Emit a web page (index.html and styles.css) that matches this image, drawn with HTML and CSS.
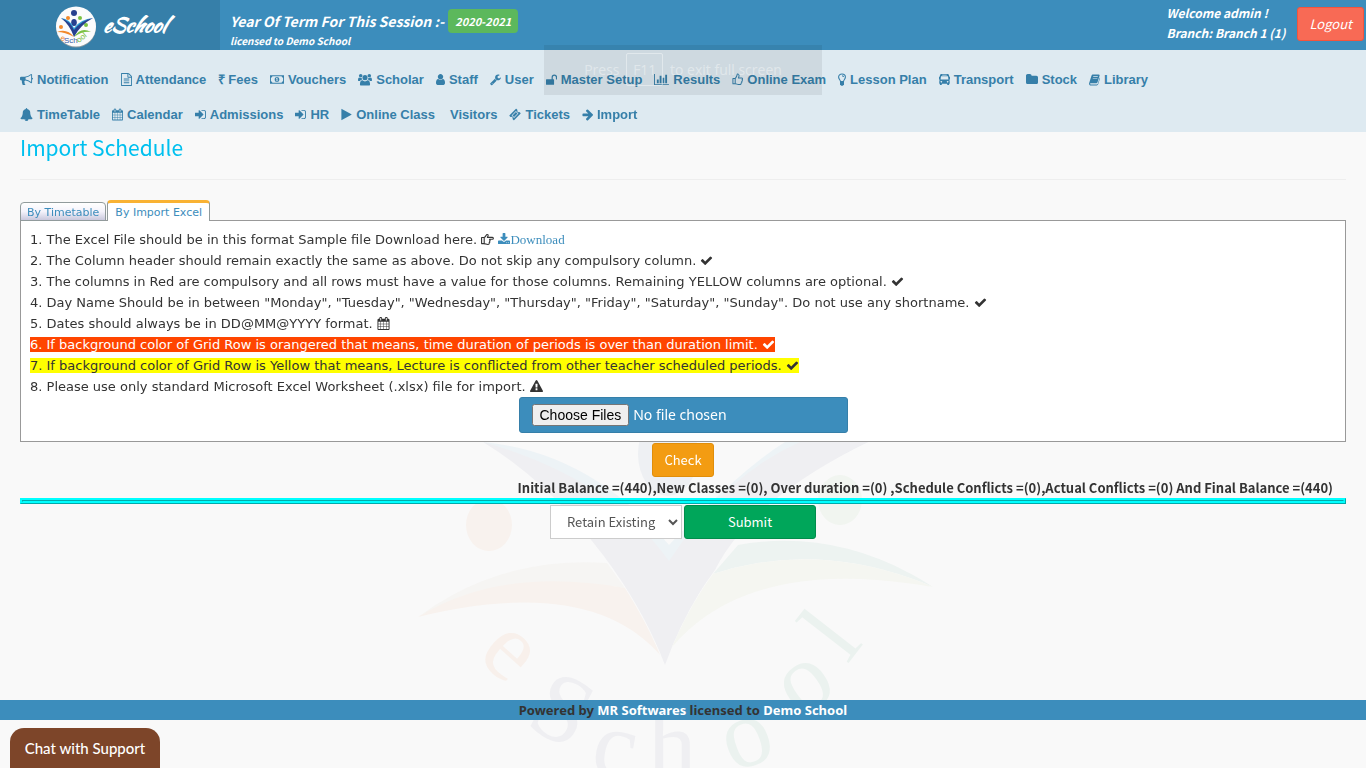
FILE: index.html
```html
<!DOCTYPE html>
<html lang="en">
<head>
<meta charset="utf-8">
<title>eSchool - Import Schedule</title>
<link rel="stylesheet" href="styles.css">
</head>
<body>
<svg class="sprite" aria-hidden="true">
  <symbol id="bullhorn" viewBox="0 0 1792 1792"><path d="M1664 640q53 0 90.500 37.500t37.500 90.500-37.500 90.500-90.500 37.500v384q0 52-38 90t-90 38q-417-347-812-380-58 19-91 66t-31 100.500 40 92.500q-20 33-23 65.500t6 58 33.500 55 48 50 61.500 50.500q-29 58-111.500 83t-168.500 11.500-132-55.500q-7-23-29.500-87.500t-32-94.500-23-89-15-101 3.500-98.500 22-110.500h-122q-66 0-113-47t-47-113v-192q0-66 47-113t113-47h480q435 0 896-384 52 0 90 38t38 90v384zm-128 604v-954q-394 302-768 343v270q377 42 768 341z"/></symbol>
  <symbol id="file" viewBox="128 0 1536 1792"><path d="M1596 380q28 28 48 76t20 88v1152q0 40-28 68t-68 28h-1344q-40 0-68-28t-28-68v-1600q0-40 28-68t68-28h896q40 0 88 20t76 48zm-444-244v376h376q-10-29-22-41l-313-313q-12-12-41-22zm384 1528v-1024h-416q-40 0-68-28t-28-68v-416h-768v1536h1280zm-1024-864q0-14 9-23t23-9h704q14 0 23 9t9 23v64q0 14-9 23t-23 9h-704q-14 0-23-9t-9-23v-64zm736 224q14 0 23 9t9 23v64q0 14-9 23t-23 9h-704q-14 0-23-9t-9-23v-64q0-14 9-23t23-9h704zm0 256q14 0 23 9t9 23v64q0 14-9 23t-23 9h-704q-14 0-23-9t-9-23v-64q0-14 9-23t23-9h704z"/></symbol>
  <symbol id="money" viewBox="0 0 15 13"><path fill-rule="evenodd" d="M0 2h15v9H0zM1 4.500v4A2 2 0 0 1 2.600 10h9.800A2 2 0 0 1 14 8.500v-4A2 2 0 0 1 12.400 3H2.600A2 2 0 0 1 1 4.500zM7.500 3.700c1.700 0 2.500 1.300 2.500 2.800s-.8 2.800-2.500 2.800S5 8 5 6.500s.8-2.800 2.500-2.800zM6.500 5v.8H7v2h-.7v.7h2.500v-.7H8V4.500h-.7z"/></symbol>
  <symbol id="users" viewBox="0 0 15 13"><circle cx="7.500" cy="4.500" r="2.700"/><circle cx="2.900" cy="2.500" r="1.900"/><circle cx="12.100" cy="2.500" r="1.900"/><path d="M3.300 13C2.400 13 2 12.300 2.100 11.200c.1-2.200.9-3.900 2.700-3.900a4 4 0 0 0 5.400 0c1.800 0 2.600 1.700 2.700 3.900.1 1.100-.3 1.800-1.200 1.800zM0 7.500C0 5.500.4 4.400 1.500 4.400c.8.600 1.700.7 2.500.4 0 .9.200 1.400.6 2-1.200.1-1.900.5-2.500 1.300C.8 8.200 0 8.200 0 7.500zM15 7.500c0-2-.4-3.100-1.500-3.100-.8.600-1.700.7-2.500.4 0 .9-.2 1.400-.6 2 1.200.1 1.900.5 2.500 1.300 1.300.1 2.100.1 2.100-.6z"/></symbol>
  <symbol id="user" viewBox="256 0 1280 1792"><path d="M1536 1399q0 109-62.500 187t-150.500 78h-854q-88 0-150.500-78t-62.500-187q0-85 8.500-160.500t31.500-152 58.500-131 94-89 134.500-34.500q131 128 313 128t313-128q76 0 134.500 34.500t94 89 58.500 131 31.500 152 8.500 160.500zm-256-887q0 159-112.500 271.500t-271.500 112.500-271.500-112.500-112.500-271.500 112.500-271.500 271.500-112.500 271.500 112.500 112.500 271.500z"/></symbol>
  <symbol id="wrench" viewBox="64 0 1664 1792"><path d="M448 1472q0-26-19-45t-45-19-45 19-19 45 19 45 45 19 45-19 19-45zm644-420l-682 682q-37 37-90 37-52 0-91-37l-106-108q-38-36-38-90 0-53 38-91l681-681q39 98 114.500 173.500t173.500 114.500zm634-435q0 39-23 106-47 134-164.500 217.500t-258.500 83.500q-185 0-316.500-131.500t-131.500-316.500 131.500-316.500 316.500-131.500q58 0 121.500 16.500t107.500 46.500q16 11 16 28t-16 28l-293 169v224l193 107q5-3 79-48.500t135.500-81 70.500-35.500q15 0 23.500 10t8.500 25z"/></symbol>
  <symbol id="unlock" viewBox="0 0 12 13"><path d="M.6 6.200h5.500V4a3 3 0 0 1 6 0v2c0 .8-1.300.8-1.300 0V4a1.700 1.700 0 0 0-3.400 0v2.200h.8c.4 0 .6.200.6.600v4.800c0 .4-.2.600-.6.600H.6c-.4 0-.6-.2-.6-.6V6.800c0-.4.200-.6.600-.6z"/></symbol>
  <symbol id="chart" viewBox="0 0 2048 1792"><path d="M640 896v512h-256v-512h256zm384-512v1024h-256v-1024h256zm1024 1152v128h-2048v-1536h128v1408h1920zm-640-896v768h-256v-768h256zm384-384v1152h-256v-1152h256z"/></symbol>
  <symbol id="thumb" viewBox="0 0 12 13"><path class="line" d="M1 5.500h2.500C5 4 5.300 3.200 5.700 1c.2-.8 2-.6 2 1.200 0 1-.4 1.800-.7 2.600h3.500c1.300 0 1.300 1.800.4 2 .6.700.5 1.600-.3 1.900.4.700.1 1.400-.6 1.600.2 1-.5 1.700-1.500 1.700H7c-1.300 0-2-.9-3.500-.9H1zM3.500 5.500v5"/></symbol>
  <symbol id="bulb" viewBox="0 0 8 13"><path class="line" d="M2.500 8.500c0-1.500-1.900-2.200-1.900-4.400C.6 2.200 2 1 4 1s3.400 1.200 3.400 3.100c0 2.200-1.900 2.900-1.900 4.400zM4 2.800c.9 0 1.500.5 1.500 1.200"/><path d="M2 9h4v2.500L4.800 12.700H3.200L2 11.500z"/></symbol>
  <symbol id="bus" viewBox="0 0 12 13"><path fill-rule="evenodd" d="M2.500.5h7c1 0 1.400.9 1.500 1.700l.2 1.300h.8v3h-.7l.4 2.500v2.200H11v1.300H9v-1.300H3v1.300H1v-1.300H.3V9l.4-2.500H0v-3h.8L1 2.200C1.100 1.400 1.500.5 2.500.5zM3.500 1.400v.8h5v-.8zM2.200 3l-.5 3.500h8.600L9.800 3zM2.500 8a.9.900 0 1 0 .1 0zM9.400 8a.9.900 0 1 0 .1 0z"/></symbol>
  <symbol id="folder" viewBox="64 0 1664 1792"><path d="M1728 608v704q0 92-66 158t-158 66h-1216q-92 0-158-66t-66-158v-960q0-92 66-158t158-66h320q92 0 158 66t66 158v32h672q92 0 158 66t66 158z"/></symbol>
  <symbol id="book" viewBox="0 0 12 13"><path fill-rule="evenodd" d="M4.500 1h6c.9 0 1.300.6 1 1.500L9.300 9.600c-.2.600-.8 1-1.400 1H2c-.6 0-.9.200-.7.700.1.400.5.600 1 .6h6.300c.5 0 .8-.2 1-.7l2.100-7c.5.300.5.800.3 1.300l-2 6.300c-.2.700-.9 1.200-1.600 1.200H2C.6 13-.3 11.600.2 10.300L2.700 2.500C3 1.500 3.500 1 4.500 1zM4.700 3l-.2.700h5L9.700 3zM4.200 4.800L4 5.500h5l.2-.7z"/></symbol>
  <symbol id="bell" viewBox="0 0 1792 1792"><path d="M912 1696q0-16-16-16-59 0-101.500-42.500t-42.500-101.500q0-16-16-16t-16 16q0 73 51.500 124.500t124.500 51.500q16 0 16-16zm816-288q0 52-38 90t-90 38h-448q0 106-75 181t-181 75-181-75-75-181h-448q-52 0-90-38t-38-90q50-42 91-88t85-119.500 74.500-158.500 50-206 19.500-260q0-152 117-282.500t307-158.500q-8-19-8-39 0-40 28-68t68-28 68 28 28 68q0 20-8 39 190 28 307 158.500t117 282.500q0 139 19.500 260t50 206 74.500 158.500 85 119.500 91 88z"/></symbol>
  <symbol id="calendar" viewBox="64 0 1664 1792"><path d="M192 1664h288v-288h-288v288zm352 0h320v-288h-320v288zm-352-352h288v-320h-288v320zm352 0h320v-320h-320v320zm-352-384h288v-288h-288v288zm736 736h320v-288h-320v288zm-384-736h320v-288h-320v288zm768 736h288v-288h-288v288zm-384-352h320v-320h-320v320zm-352-864v-288q0-13-9.500-22.500t-22.500-9.500h-64q-13 0-22.500 9.500t-9.500 22.500v288q0 13 9.500 22.500t22.500 9.500h64q13 0 22.500-9.500t9.500-22.500zm736 864h288v-320h-288v320zm-384-384h320v-288h-320v288zm384 0h288v-288h-288v288zm32-480v-288q0-13-9.500-22.500t-22.500-9.500h-64q-13 0-22.500 9.500t-9.500 22.500v288q0 13 9.500 22.500t22.500 9.500h64q13 0 22.500-9.500t9.500-22.500zm384-64v1280q0 52-38 90t-90 38h-1408q-52 0-90-38t-38-90v-1280q0-52 38-90t90-38h128v-96q0-66 47-113t113-47h64q66 0 113 47t47 113v96h384v-96q0-66 47-113t113-47h64q66 0 113 47t47 113v96h128q52 0 90 38t38 90z"/></symbol>
  <symbol id="signin" viewBox="128 0 1536 1792"><path d="M1312 896q0 26-19 45l-544 544q-19 19-45 19t-45-19-19-45v-288h-448q-26 0-45-19t-19-45v-384q0-26 19-45t45-19h448v-288q0-26 19-45t45-19 45 19l544 544q19 19 19 45zm352-352v704q0 119-84.500 203.500t-203.500 84.500h-320q-32-8-32-60t32-68h320q66 0 113-47t47-113v-704q0-66-47-113t-113-47h-320q-32-8-32-60t32-68h320q119 0 203.500 84.500t84.500 203.500z"/></symbol>
  <symbol id="play" viewBox="192 0 1408 1792"><path d="M1576 927l-1328 738q-23 13-39.500 3t-16.500-36v-1472q0-26 16.500-36t39.500 3l1328 738q23 13 23 31t-23 31z"/></symbol>
  <symbol id="ticket" viewBox="0 0 13 13"><path fill-rule="evenodd" d="M8.200.6l1 1a1.600 1.600 0 0 0 2.200 2.200l1 1c.3.300.3.600 0 .9l-6.700 6.700c-.3.300-.6.300-.9 0l-1-1a1.600 1.600 0 0 0-2.200-2.200l-1-1c-.3-.3-.3-.6 0-.9L7.300.6c.3-.3.600-.3.900 0zM7.500 2.800L2.800 7.500l2.700 2.700 4.700-4.700zM7.500 3.800l1.700 1.700-3.700 3.700-1.700-1.700z"/></symbol>
  <symbol id="arrow" viewBox="64 0 1536 1792"><path d="M1600 960q0 54-37 91l-651 651q-39 37-91 37-51 0-90-37l-75-75q-38-38-38-91t38-91l293-293h-704q-52 0-84.500-37.500t-32.500-90.500v-128q0-53 32.500-90.500t84.500-37.500h704l-293-294q-38-36-38-90t38-90l75-75q38-38 90-38 53 0 91 38l651 651q37 35 37 90z"/></symbol>
  <symbol id="check" viewBox="64 0 1664 1792"><path d="M1671 566q0 40-28 68l-724 724-136 136q-28 28-68 28t-68-28l-136-136-362-362q-28-28-28-68t28-68l136-136q28-28 68-28t68 28l294 295 656-657q28-28 68-28t68 28l136 136q28 28 28 68z"/></symbol>
  <symbol id="warning" viewBox="0 0 1792 1792"><path d="M1024 1375v-190q0-14-9.500-23.500t-22.500-9.500h-192q-13 0-22.500 9.500t-9.500 23.500v190q0 14 9.500 23.500t22.500 9.500h192q13 0 22.500-9.500t9.500-23.500zm-2-374l18-459q0-12-10-19-13-11-24-11h-220q-11 0-24 11-10 7-10 21l17 457q0 10 10 16.500t24 6.500h185q14 0 23.500-6.500t10.500-16.500zm-14-934l768 1408q35 63-2 126-17 29-46.500 46t-63.500 17h-1536q-34 0-63.500-17t-46.500-46q-37-63-2-126l768-1408q17-31 47-49t65-18 65 18 47 49z"/></symbol>
  <symbol id="download" viewBox="64 0 1664 1792"><path d="M1344 1344q0-26-19-45t-45-19-45 19-19 45 19 45 45 19 45-19 19-45zm256 0q0-26-19-45t-45-19-45 19-19 45 19 45 45 19 45-19 19-45zm128-224v320q0 40-28 68t-68 28h-1472q-40 0-68-28t-28-68v-320q0-40 28-68t68-28h465l135 136q58 56 136 56t136-56l136-136h464q40 0 68 28t28 68zm-325-569q17 41-14 70l-448 448q-18 19-45 19t-45-19l-448-448q-31-29-14-70 17-39 59-39h256v-448q0-26 19-45t45-19h256q26 0 45 19t19 45v448h256q42 0 59 39z"/></symbol>
  <symbol id="hand" viewBox="0 0 13 13"><path class="line" d="M.6 4.500h2.600C4.500 4 5 2 6 1.500c1-.3 1.400.7 1 1.500l-.6 1.400h5c1.300 0 1.300 1.900 0 1.900H8.500c.9.500.8 1.500 0 1.800.6.600.4 1.500-.4 1.700.4.900-.1 1.700-1.200 1.700-1.500 0-2.300-.7-3.700-.9H.6zM3.200 4.500v6.100"/></symbol>
</svg>

<svg class="watermark" viewBox="400 340 560 460" aria-hidden="true">
  <g fill="#eef0f3">
    <ellipse cx="668" cy="454" rx="30" ry="42"/>
    <path fill="#edf3f6" d="M483 442Q590 452 669 545Q740 470 785 442H868Q730 510 669 562Q600 500 483 442z"/>
    <path fill="#efeff2" d="M483 442Q610 478 669 561Q725 475 800 442H868Q750 500 715 570Q685 610 665 665Q640 600 592 541Q545 480 483 442z"/>
  </g>
  <ellipse cx="489" cy="525" rx="23" ry="26" fill="#f8f2ee"/>
  <ellipse cx="840" cy="500" rx="22" ry="25" fill="#f1f5f0"/>
  <path fill="#f6f5f3" d="M418 617Q500 556 607 563L625 588Q500 570 418 617z"/>
  <path fill="#f8f2ee" d="M418 617Q500 566 625 588Q648 625 660 655Q590 575 418 617z"/>
  <path fill="#edf3f1" d="M738 545Q840 527 933 587Q820 539 713 574z"/>
  <path fill="#f5f6f1" d="M933 587Q820 539 713 574Q690 605 672 647Q750 555 933 587z"/>
  <g class="watermark-letters">
    <text fill="#f8f0eb" transform="translate(507 655) rotate(42)">e</text>
    <text fill="#efeff2" transform="translate(558 718) rotate(28)">S</text>
    <text fill="#efeff2" transform="translate(614 755) rotate(10)">c</text>
    <text fill="#efeff2" transform="translate(672 755)">h</text>
    <text fill="#ebf2ef" transform="translate(748 743) rotate(-20)">o</text>
    <text fill="#ebf2ef" transform="translate(807 687) rotate(-35)">o</text>
    <text fill="#ebf2ef" transform="translate(838 640) rotate(-52)">l</text>
  </g>
</svg>

<header class="topbar">
  <a class="brand" href="#">
    <svg class="brand-logo" viewBox="0 0 42 42" aria-hidden="true">
      <circle cx="21" cy="21.500" r="20" fill="#8797a0"/>
      <circle cx="21" cy="20.500" r="20" fill="#fbfbfc"/>
      <circle cx="19" cy="7" r="3" fill="#27408f"/>
      <circle cx="13" cy="12" r="2" fill="#f28a2b"/>
      <circle cx="25" cy="12" r="2" fill="#7ac143"/>
      <circle cx="6" cy="21" r="2" fill="#f28a2b"/>
      <circle cx="31" cy="19" r="2" fill="#7ac143"/>
      <ellipse cx="19" cy="16.500" rx="2.800" ry="3.500" fill="#27408f"/>
      <path fill="#2fa0d8" d="M6 12Q15 13 19 22Q26 13 38 12Q26 15 19 26Q14 16 6 12z"/>
      <path fill="#27408f" d="M6 12Q15 15 19 24Q27 14 38 12Q25 19 19 31Q15 19 6 12z"/>
      <path fill="#f28a2b" d="M2 26Q12 22 19 31Q10 26 2 26z"/>
      <path fill="#7ac143" d="M36 26Q26 20 19 31Q27 25 36 26z"/>
      <g class="brand-letters">
        <text x="5" y="34" fill="#f28a2b" transform="rotate(20 5 34)">e</text>
        <text x="9" y="37" fill="#3d5fa8">Sch</text>
        <text x="24" y="37" fill="#7ac143" transform="rotate(-40 24 37)">ool</text>
      </g>
    </svg>
    <span>eSchool</span>
  </a>
  <div class="session">
    <div class="session-line">Year Of Term For This Session :-<span class="badge">2020-2021</span></div>
    <div class="licence">licensed to Demo School</div>
  </div>
  <div class="account">
    <div>Welcome admin !<br>Branch: Branch 1 (1)</div>
    <button class="btn logout" type="button">Logout</button>
  </div>
</header>

<nav class="menu" aria-label="Main">
  <a href="#"><svg><use href="#bullhorn"/></svg>Notification</a>
  <a href="#"><svg class="w11"><use href="#file"/></svg>Attendance</a>
  <a href="#"><span class="rupee">₹</span>Fees</a>
  <a href="#"><svg class="w14"><use href="#money"/></svg>Vouchers</a>
  <a href="#"><svg class="w14"><use href="#users"/></svg>Scholar</a>
  <a href="#"><svg class="w9"><use href="#user"/></svg>Staff</a>
  <a href="#"><svg class="w11"><use href="#wrench"/></svg>User</a>
  <a href="#"><svg class="w11"><use href="#unlock"/></svg>Master Setup</a>
  <a href="#"><svg class="w15"><use href="#chart"/></svg>Results</a>
  <a href="#"><svg class="w11"><use href="#thumb"/></svg>Online Exam</a>
  <a href="#"><svg class="w8"><use href="#bulb"/></svg>Lesson Plan</a>
  <a href="#"><svg class="w11"><use href="#bus"/></svg>Transport</a>
  <a href="#"><svg class="w12"><use href="#folder"/></svg>Stock</a>
  <a href="#"><svg class="w11"><use href="#book"/></svg>Library</a>
  <a href="#"><svg><use href="#bell"/></svg>TimeTable</a>
  <a href="#"><svg class="w11"><use href="#calendar"/></svg>Calendar</a>
  <a href="#"><svg class="w11"><use href="#signin"/></svg>Admissions</a>
  <a href="#"><svg class="w11"><use href="#signin"/></svg>HR</a>
  <a href="#"><svg class="w11"><use href="#play"/></svg>Online Class</a>
  <a class="plain" href="#">Visitors</a>
  <a href="#"><svg class="w12"><use href="#ticket"/></svg>Tickets</a>
  <a href="#"><svg class="w11"><use href="#arrow"/></svg>Import</a>
</nav>
<div class="fullscreen-hint">Press <kbd>F11</kbd> to exit full screen</div>

<main>
  <h1>Import Schedule</h1>
  <div class="tabs" role="tablist">
    <button class="tab" type="button" role="tab" aria-selected="false">By Timetable</button>
    <button class="tab active" type="button" role="tab" aria-selected="true">By Import Excel</button>
  </div>
  <section class="panel">
    <ol>
      <li><span>1. The Excel File should be in this format Sample file Download here. <svg><use href="#hand"/></svg> <a class="download" href="#"><svg class="w12"><use href="#download"/></svg>Download</a></span></li>
      <li><span>2. The Column header should remain exactly the same as above. Do not skip any compulsory column. <svg><use href="#check"/></svg></span></li>
      <li><span>3. The columns in Red are compulsory and all rows must have a value for those columns. Remaining YELLOW columns are optional. <svg><use href="#check"/></svg></span></li>
      <li><span>4. Day Name Should be in between "Monday", "Tuesday", "Wednesday", "Thursday", "Friday", "Saturday", "Sunday". Do not use any shortname. <svg><use href="#check"/></svg></span></li>
      <li><span>5. Dates should always be in DD@MM@YYYY format. <svg><use href="#calendar"/></svg></span></li>
      <li><span class="over">6. If background color of Grid Row is orangered that means, time duration of periods is over than duration limit. <svg><use href="#check"/></svg></span></li>
      <li><span class="conflict">7. If background color of Grid Row is Yellow that means, Lecture is conflicted from other teacher scheduled periods. <svg><use href="#check"/></svg></span></li>
      <li><span>8. Please use only standard Microsoft Excel Worksheet (.xlsx) file for import. <svg><use href="#warning"/></svg></span></li>
    </ol>
    <input class="file" type="file" multiple aria-label="Excel files">
  </section>
  <button class="btn check" type="button">Check</button>
  <p class="summary">Initial Balance =(440),New Classes =(0), Over duration =(0) ,Schedule Conflicts =(0),Actual Conflicts =(0) And Final Balance =(440)</p>
  <hr>
  <div class="actions">
    <select aria-label="Existing schedule"><option>Retain Existing</option></select>
    <button class="btn submit" type="button">Submit</button>
  </div>
</main>

<footer>Powered by <a href="#">MR Softwares</a> licensed to <a href="#">Demo School</a></footer>
<button class="chat" type="button">Chat with Support</button>
</body>
</html>
```
FILE: styles.css
```css
* { box-sizing: border-box; }

body {
  margin: 0;
  min-height: 100vh;
  display: flex;
  flex-direction: column;
  background: #f9f9f9;
  color: #333;
  font: 13px/20px "Source Sans Pro", "Noto Sans CJK SC", sans-serif;
  padding-bottom: 48px;
}

a { text-decoration: none; color: #3c8dbc; }
svg { width: 13px; height: 13px; fill: currentColor; }
.sprite { position: absolute; width: 0; height: 0; }
.line { fill: none; stroke: currentColor; stroke-width: 1.1; stroke-linejoin: round; }
.w8 { width: 8px; }
.w9 { width: 9px; }
.w11 { width: 11px; }
.w12 { width: 12px; }
.w14 { width: 14px; }
.w15 { width: 15px; }

.watermark {
  position: fixed;
  z-index: -1;
  left: 50%;
  bottom: -32px;
  margin-left: -283px;
  width: 560px;
  height: 460px;
}
.watermark-letters {
  font: 98px "Liberation Serif", serif;
  text-anchor: middle;
}
.watermark-letters text { dominant-baseline: middle; }

.topbar {
  display: flex;
  height: 50px;
  background: #3c8dbc;
  color: #fff;
  font-weight: 700;
  font-style: italic;
}
.brand {
  width: 220px;
  display: flex;
  align-items: center;
  justify-content: center;
  gap: 6px;
  background: #367fa9;
  color: #fff;
  font: italic 700 20px/50px "Kaushan Script", "Liberation Serif", serif;
}
.brand-logo { width: 42px; height: 42px; margin-top: 4px; }
.brand-letters { font: 8px "Liberation Sans", sans-serif; }
.session { padding: 9px 10px 0; flex: 1; }
.session-line {
  display: flex;
  align-items: center;
  gap: 4px;
  font-size: 14px;
  line-height: 24px;
}
.badge {
  background: #5cb85c;
  border-radius: 4px;
  padding: 0 7px;
  font-size: 11px;
}
.licence { font-size: 10px; line-height: 16px; }
.account {
  display: flex;
  gap: 12px;
  align-items: flex-start;
  padding: 3px 2px 0 0;
  font-size: 12px;
}
.btn {
  font: 13px/20px "Source Sans Pro", "Noto Sans CJK SC", sans-serif;
  color: #fff;
  padding: 6px 11px;
  border: 1px solid;
  border-radius: 3px;
}
.logout {
  background: #f86a55;
  border-color: #f4543c;
  font-style: italic;
  margin-top: 4px;
}

.menu {
  display: flex;
  flex-wrap: wrap;
  column-gap: 12px;
  padding: 12px 140px 0 20px;
  background: #deeaf1;
}
.menu a {
  display: flex;
  align-items: center;
  gap: 4px;
  color: #367fa9;
  font: 700 13px/35px "Liberation Sans", Arial, sans-serif;
}
.menu .plain { padding-left: 3px; }
.rupee { width: 6px; }

.fullscreen-hint {
  position: absolute;
  top: 45px;
  left: 50%;
  margin-left: -139px;
  width: 278px;
  height: 50px;
  background: rgba(0, 0, 0, .07);
  color: rgba(255, 255, 255, .4);
  font: 14px/50px "Open Sans", sans-serif;
  text-align: center;
  pointer-events: none;
}
.fullscreen-hint kbd {
  font: inherit;
  border: 1px solid;
  border-radius: 2px;
  padding: 6px;
  margin: 0 3px;
}

main { padding: 0 20px; display: flex; flex-direction: column; }
h1 {
  margin: 0 0 20px;
  padding: 1px 0 18px;
  border-bottom: 1px solid #eee;
  color: #00c0ef;
  font-size: 21px;
  line-height: 28px;
  font-weight: 400;
}
.tabs { display: flex; align-items: flex-end; gap: 1px; margin-bottom: -1px; }
.tab {
  position: relative;
  height: 19px;
  padding: 1px 6px 0;
  border: 1px solid #919b9c;
  border-radius: 4px 4px 0 0;
  background: linear-gradient(#fff, #f4f3fb 50%, #c9c8dd);
  color: #3c8dbc;
  font: 11px/17px Verdana, "DejaVu Sans", sans-serif;
}
.tab.active {
  height: 21px;
  padding: 0 7px;
  border-top: 3px solid #f9b233;
  border-bottom: 0;
  background: #fff;
}
.panel {
  display: flex;
  flex-direction: column;
  align-items: center;
  border: 1px solid #999;
  background: #fff;
  padding: 8px 9px;
}
ol {
  align-self: stretch;
  list-style: none;
  margin: 0;
  padding: 0;
  font: 13px/21px Verdana, "DejaVu Sans", sans-serif;
}
li svg { vertical-align: -2px; }
.download { font-family: "Liberation Serif", serif; }
.over { background: orangered; color: #fff; }
.conflict { background: yellow; }
.file {
  width: 329px;
  height: 36px;
  padding: 6px 12px;
  border: 1px solid #367fa9;
  border-radius: 3px;
  background: #3c8dbc;
  color: #fff;
  font: 14px/22px "Noto Sans", sans-serif;
}
.file::file-selector-button { font: 14px/16px "Liberation Sans", sans-serif; }
.check {
  align-self: center;
  margin-top: 1px;
  background: #f39c12;
  border-color: #e08e0b;
}
.summary {
  margin: 1px 13px 0;
  text-align: right;
  font-weight: 700;
}
hr { width: 100%; margin: 0; border: 3px ridge aqua; }
.actions { display: flex; justify-content: center; gap: 2px; padding-top: 1px; }
select {
  width: 132px;
  height: 34px;
  padding: 5px 8px 7px 12px;
  border: 1px solid #ccc;
  background: #fff;
  color: #555;
  font: 13px/20px "Source Sans Pro", "Noto Sans CJK SC", sans-serif;
}
.submit { width: 132px; background: #00a65a; border-color: #008d4c; }

footer {
  margin-top: auto;
  background: #3c8dbc;
  text-align: center;
  font: 700 13px/20px "Comic Sans MS", "Noto Sans", sans-serif;
}
footer a { color: #fff; }
.chat {
  position: fixed;
  left: 10px;
  bottom: 0;
  width: 150px;
  height: 40px;
  border: 0;
  border-radius: 14px 14px 0 0;
  background: #7d4529;
  color: #fff;
  font: 500 15px/20px Lato, sans-serif;
}
```
